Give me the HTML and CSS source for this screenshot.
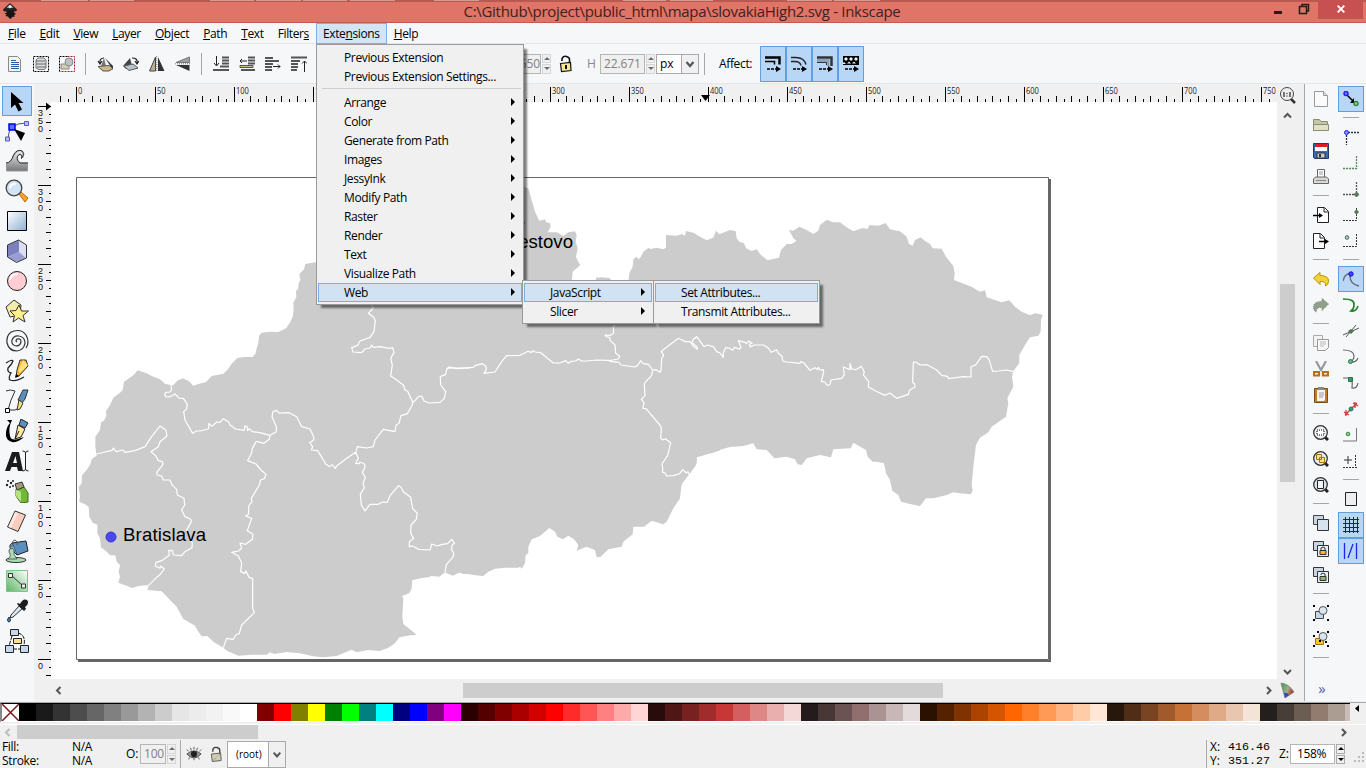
FILE: index.html
```html
<!DOCTYPE html>
<html lang="en">
<head>
<meta charset="utf-8">
<title>slovakiaHigh2.svg - Inkscape</title>
<link rel="stylesheet" href="styles.css">
</head>
<body>
<div class="window">
  <header class="titlebar">
    <svg class="logo" viewBox="0 0 18 18"><path d="M9 1l7 6.500q0 2-3 2H5q-3 0-3-2z" fill="#222"/><path d="M9 2.500l3.500 3.500-2-.5-1.500 1-1.500-1-2 .7z" fill="#dfe8f2"/><path d="M5 8.500h8v2l2 1.500-2 1 1 1.500-3 .5-1 2-2-1-1-1.500-2.500-.5 1-1.500-2-1 2.500-1z" fill="#151515"/></svg>
    <h1 class="title">C:\Github\project\public_html\mapa\slovakiaHigh2.svg - Inkscape</h1>
    <div class="winbtns">
      <svg class="wb" viewBox="0 0 26 20"><path d="M9 11h8v3H9z" fill="#2a1a18"/></svg>
      <svg class="wb" viewBox="0 0 26 20"><path d="M8.500 6.500h7v7h-7zM11 6V4.500h6.500v6.500H16" fill="none" stroke="#2a1a18" stroke-width="1.500"/></svg>
      <svg class="close" viewBox="0 0 45 20"><path d="M19.500 6l7 7m0-7l-7 7" stroke="#fff" stroke-width="2"/></svg>
    </div>
  </header>

  <nav class="menubar">
    <span class="mi"><u>F</u>ile</span><span class="mi"><u>E</u>dit</span><span class="mi"><u>V</u>iew</span><span class="mi"><u>L</u>ayer</span><span class="mi"><u>O</u>bject</span><span class="mi"><u>P</u>ath</span><span class="mi"><u>T</u>ext</span><span class="mi">Filter<u>s</u></span><span class="mi open">Exte<u>n</u>sions</span><span class="mi"><u>H</u>elp</span>
  </nav>

  <div class="toolbar">
    <div class="group">
      <svg class="ic" viewBox="0 0 16 16"><path d="M1.500.5h9l3 3v12h-12z" fill="#f4f4f2" stroke="#888a85"/><path d="M4 4.500h5M4 6.500h8M4 8.500h8M4 10.500h8M4 12.500h8" stroke="#2a5caa" stroke-width="1.200"/></svg>
      <svg class="ic" viewBox="0 0 16 16"><path d="M.5.5h15v15H.5z" fill="none" stroke="#000" stroke-dasharray="2 1"/><path d="M3 4l2-2h6l2 2v8l-2 1.500H6L3 12z" fill="#ddd" stroke="#777"/><path d="M3 5h9M3 8h10M4 11h9" stroke="#666"/></svg>
      <svg class="ic" viewBox="0 0 16 16"><path d="M.5 15.500V.5h8" fill="none" stroke="#000" stroke-dasharray="2 1"/><path d="M8.500.5h7v15H.5" fill="none" stroke="#a02030" stroke-dasharray="2 1"/><path d="M2 8h8v5H2z" fill="#d8cfa8" stroke="#888"/><circle cx="10" cy="6" r="4" fill="#bcc2c8" stroke="#888"/></svg>
    </div>
    <i class="vsep"></i>
    <div class="group">
      <svg class="ic" viewBox="0 0 16 16"><path d="M7 2l2 8H4z" fill="#777"/><path d="M8 2l8 8v4z" fill="#333"/><path d="M1 10.500l11-1 4 3-4 2.500H6z" fill="#cdb985" stroke="#555"/><path d="M7 2Q2 2 3 8M1 5l2 3 2-3" fill="none" stroke="#222" stroke-width="1.200"/></svg>
      <svg class="ic" viewBox="0 0 16 16"><path d="M7 2L0 10l3 3 6-3z" fill="#444"/><path d="M1 10l5 4.500 9-2.500-5-4z" fill="#bcc4cb" stroke="#555"/><path d="M9 2q6 0 5 5M12 5l2 3 2-3" fill="none" stroke="#222" stroke-width="1.200"/></svg>
      <svg class="ic" viewBox="0 0 16 16"><path d="M6.500 1v14H.5z" fill="#b9b093" stroke="#444"/><path d="M9 1v14h6.500z" fill="#333"/><path d="M7.800 0v16" stroke="#777" stroke-dasharray="1 1"/></svg>
      <svg class="ic" viewBox="0 0 16 16"><path d="M14.500 1v5.500H1z" fill="#9aa0a5" stroke="#777"/><path d="M14.500 15V9H1z" fill="#333"/><path d="M0 7.800h16" stroke="#777" stroke-dasharray="1 1"/></svg>
    </div>
    <i class="vsep"></i>
    <div class="group">
      <svg class="ic" viewBox="0 0 16 16"><path d="M3.500 0v9M1 7l2.500 3L6 7" fill="none" stroke="#222"/><path d="M9 1.500h7M9 4.500h7M9 7.500h7M7 10.500h9M0 14h16" stroke="#555" stroke-width="2"/></svg>
      <svg class="ic" viewBox="0 0 16 16"><path d="M1 5h7M3 3L1 5l2 2" fill="none" stroke="#222"/><path d="M9 1.500h7M9 4.500h7M9 7.500h7M2 14h14" stroke="#555" stroke-width="2"/><path d="M1 9.500h13v2H1z" fill="#cdb985" stroke="#555"/></svg>
      <svg class="ic" viewBox="0 0 16 16"><path d="M0 2h8M0 5h14M0 8h8M0 11h7M0 14h7" stroke="#555" stroke-width="2"/><path d="M8 10.500h7M13 8.500l2 2-2 2" fill="none" stroke="#222"/></svg>
      <svg class="ic" viewBox="0 0 16 16"><path d="M0 1.500h16M0 5h9M0 8h7M0 11h7M0 14h6" stroke="#555" stroke-width="2"/><path d="M13.500 16V5M11 7.500L13.500 5 16 7.500" fill="none" stroke="#222"/></svg>
    </div>
    <div class="size">
      <span class="num w">137.550</span><span class="spin dis"><b></b><b></b></span>
      <svg class="lock" viewBox="0 0 14 18"><path d="M3 6V4q1-3.500 4.500-2.500Q11 2.500 10.500 5v3" fill="none" stroke="#111" stroke-width="1.600"/><path d="M1.500 8.500l10-1 .5 8-9.500 1z" fill="#f4e98e" stroke="#111" stroke-width="1.200"/><path d="M7 10v4" stroke="#111" stroke-width="2"/></svg>
      <span class="lbl">H</span>
      <span class="num">22.671</span><span class="spin dis"><b></b><b></b></span>
      <span class="combo"><span>px</span><svg viewBox="0 0 16 18"><path d="M4.500 7L8 11l3.500-4" fill="none" stroke="#555" stroke-width="2.200"/></svg></span>
      <i class="vsep"></i>
      <span class="affect">Affect:</span>
    </div>
    <div class="toggles">
      <span class="tg"><svg class="tic" viewBox="0 0 16 16"><path d="M0 1.500h14.500v7" fill="none" stroke="#000" stroke-width="2.500"/><path d="M0 5.500h9.500v3" fill="none" stroke="#000" stroke-width="1.500"/><path d="M2 13h10" stroke="#000" stroke-width="1.500" stroke-dasharray="3 1"/><path d="M11 10l5 3-5 3z"/></svg></span>
      <span class="tg"><svg class="tic" viewBox="0 0 16 16"><path d="M0 1.500h5q8 0 10 7M0 5.500h4q5 0 6 4" fill="none" stroke="#222" stroke-width="1.400"/><path d="M2 13h10" stroke="#000" stroke-width="1.500" stroke-dasharray="3 1"/><path d="M11 10l5 3-5 3z"/></svg></span>
      <span class="tg"><svg class="tic" viewBox="0 0 16 16"><path d="M0 1.500h14.500V10" fill="none" stroke="#333" stroke-width="2.500"/><path d="M0 4.500h11V10" fill="none" stroke="#8fa3b8" stroke-width="3"/><path d="M0 6.500h9.500V9" fill="none" stroke="#333"/><path d="M2 13h10" stroke="#000" stroke-width="1.500" stroke-dasharray="3 1"/><path d="M11 10l5 3-5 3z"/></svg></span>
      <span class="tg"><svg class="tic" viewBox="0 0 16 16"><path d="M0 0h16v9H0z"/><path d="M1 3l2-2 2 2-2 2zM6 3l2-2 2 2-2 2zM11 3l2-2 2 2-2 2zM0 7l1-1 2 2H0zM4 7.500l2-2 2 2zM9 7.500l2-2 2 2z" fill="#e8f1fb"/><path d="M2 13h10" stroke="#000" stroke-width="1.500" stroke-dasharray="3 1"/><path d="M11 10l5 3-5 3z"/></svg></span>
    </div>
  </div>

  <div class="main">
    <aside class="toolbox">
      <span class="tool on"><svg viewBox="0 0 24 24"><path d="M6 3v16l4-3.500 3.500 7 3.500-2-3.500-6.500h5z" fill="#000"/></svg></span>
      <span class="tool"><svg viewBox="0 0 24 24"><path d="M3 20Q3 4 21 4" fill="none" stroke="#555"/><path d="M4 5h6v6H4z" fill="#5a6cff" stroke="#00e" stroke-width="1.500"/><path d="M19.500 2.500h4v4h-4zM.5 22h4v-4H.5z" fill="#b9bdf2" stroke="#5656d8"/><path d="M9 10l11 4-4 8z"/></svg></span>
      <span class="tool"><svg viewBox="0 0 24 24"><defs><linearGradient id="gw" x2="0" y2="1"><stop offset="0" stop-color="#eee"/><stop offset="1" stop-color="#777"/></linearGradient></defs><path d="M1.500 22v-8q5 0 7-7 4-7 9-5 3 3 0 7 0-5-4-3-4 4 1 8h8v8z" fill="url(#gw)" stroke="#999"/><path d="M1 14q5 0 7.500-8Q12-.5 17 2q3 3-.5 7.500.5-5-2.500-4-4 4 1 8.500h8" fill="none" stroke="#333"/></svg></span>
      <span class="tool"><svg viewBox="0 0 24 24"><path d="M14 15l2-2 7 6-3 4z" fill="#f6a52b" stroke="#b36b00"/><circle cx="9" cy="9" r="7.800" fill="#d2e3f4" stroke="#444" stroke-width="1.300"/><path d="M5 9q1-5 6-4" fill="none" stroke="#fff" stroke-width="2"/></svg></span>
      <span class="tool"><svg viewBox="0 0 24 24"><defs><linearGradient id="gr" x2="1" y2="1"><stop offset="0" stop-color="#fff"/><stop offset="1" stop-color="#8db0d0"/></linearGradient></defs><path d="M2.500 2.500h19v19h-19z" fill="url(#gr)" stroke="#000"/></svg></span>
      <span class="tool"><svg viewBox="0 0 24 24"><path d="M3 6l11-5v12L3 18z" fill="#7d80bf"/><path d="M14 1.500l7 5V19l-7-6z" fill="#dcdef5"/><path d="M3 18l11-5 7 6-9.500 4z" fill="#9a9dd4"/><path d="M2.500 6l11-5 8 5v13l-10 4.500-9-5.500z" fill="none" stroke="#333"/></svg></span>
      <span class="tool"><svg viewBox="0 0 24 24"><circle cx="12" cy="12" r="9.500" fill="#ffcdd2" stroke="#222"/><path d="M5 11q1-6 8-6" fill="none" stroke="#fff" stroke-width="2"/></svg></span>
      <span class="tool"><svg viewBox="0 0 24 24"><path d="M1 8l8-7 7 5-1 10-10 2z" fill="#f4ecab" stroke="#333"/><path d="M14 6l2.500 6 7 0-5.500 4.500 2 6.500-6.500-4-5.500 4 1.500-6.500L5 12l6-.5z" fill="#fff08a" stroke="#333"/></svg></span>
      <span class="tool"><svg viewBox="0 0 24 24"><path d="M12 13q-2-1 0-3 4-1 4 3-1 4-5 4-5-1-4-6 2-5 7-4 6 1 6 7-1 7-8 8-8 0-10-8Q1 4 9 2q8-2 12 4 4 7 0 13" fill="none" stroke="#333" stroke-width="1.200"/></svg></span>
      <span class="tool"><svg viewBox="0 0 24 24"><path d="M1 4q6-4 7-2-1 3-5 7-1 4 3 5-3 5-1 7 6 2 14-3" fill="none" stroke="#222" stroke-width="1.300"/><path d="M15 1h6l2 6-9 10-3 1 1-7z" fill="#ffb52e" stroke="#333"/><path d="M18 1l-5 11 2 2 8-8z" fill="#ffe27a"/><path d="M10 19l1-4 3 2z"/></svg></span>
      <span class="tool"><svg viewBox="0 0 24 24"><path d="M1 2q4-2 9 0-5 10-7 19h7q7-2 4-11" fill="none" stroke="#333"/><path d="M.5 19.500h4v4h-4z" fill="#fff" stroke="#000"/><path d="M18 1h5l-3 9-3 4-4-3z" fill="#5b8fbf" stroke="#333"/><path d="M14 11l4 3-3 6-3 1z" fill="#ffe27a" stroke="#333"/></svg></span>
      <span class="tool"><svg viewBox="0 0 24 24"><path d="M2 1h5q-4 8-2 16 1 5 8 3l6-2q-6 6-12 5-7-2-6-10 1-6 4-9z"/><path d="M16 0l7 4-3 5-6-3z" fill="#5b8fbf" stroke="#222"/><path d="M13 6l7 4-4 8-6 2z" fill="#ffe9a0" stroke="#222"/><path d="M10 20l4-8" stroke="#222"/></svg></span>
      <span class="tool"><svg viewBox="0 0 24 24"><path d="M0 22L7 3h7l4 19h-5l-1-4H6.500L5 22zM8 14h4L10.500 7z" fill="#1c1c1c" fill-rule="evenodd"/><path d="M17.500 2q3 0 3 2v16q0 2-3 2m6-20q-3 0-3 2v16q0 2 3 2" fill="none" stroke="#222"/></svg></span>
      <span class="tool"><svg viewBox="0 0 24 24"><path d="M11 10l8-2 4 6v9l-7 1-5-7z" fill="#74b83a" stroke="#3c6b17"/><path d="M11 10l5 3v10l-5-6z" fill="#b4e37f"/><path d="M10 5l7-2 2 5-7 3z" fill="#a59b7c" stroke="#333"/><g fill="#222"><circle cx="3" cy="2" r="1"/><circle cx="6" cy="4" r="1.200"/><circle cx="2" cy="6" r="1.200"/><circle cx="5" cy="8" r="1"/><circle cx="8" cy="2" r="1"/><circle cx="8" cy="7" r="1"/></g></svg></span>
      <span class="tool"><svg viewBox="0 0 24 24"><path d="M10 2l10.500 4L13 22.500 2.500 18z" fill="#f8cdbd" stroke="#333"/><path d="M10 3l3 1-7 15-2.500-1z" fill="#fff" opacity=".5"/></svg></span>
      <span class="tool"><svg viewBox="0 0 24 24"><ellipse cx="11" cy="21" rx="10" ry="2.500" fill="#a9dcb4" stroke="#333"/><path d="M7 4l14-2 2 10-11 4z" fill="#5b8fbf" stroke="#222"/><path d="M12 16L5 9q-1-3 2-5" fill="#8fb7d8" stroke="#222"/><path d="M7 9q-4 1-3 4 3 4-1 7h9q-4-4-3-9z" fill="#a9dcb4" stroke="#333" stroke-width=".7"/><path d="M7 8q0-7 3-7 3 1 2 5" fill="none" stroke="#555"/></svg></span>
      <span class="tool"><svg viewBox="0 0 24 24"><defs><linearGradient id="gg" x1="1" x2="0" y2="1"><stop offset="0" stop-color="#fff"/><stop offset="1" stop-color="#5cb566"/></linearGradient></defs><path d="M1.500 1.500h21v21h-21z" fill="url(#gg)" stroke="#7fc488"/><path d="M6 6l12 11" stroke="#333"/><path d="M3.500 4.500h4v4h-4zM16.500 15h4v4h-4z" fill="#e8f5e9" stroke="#333"/></svg></span>
      <span class="tool"><svg viewBox="0 0 24 24"><path d="M15 5q3-6 7-4 3 3-2 7l1 2-2 2-7-7 1-1z" fill="#1c1c1c"/><path d="M14 7l3 3-9 8-3 1 1-3z" fill="#dde6ec" stroke="#333"/><path d="M4 18q3 4 0 5-3-1 0-5z" fill="#3f7fb5" stroke="#234"/></svg></span>
      <span class="tool"><svg viewBox="0 0 24 24"><path d="M7 7L4 17M13 4q8 2 6 12M8 20h8" fill="none" stroke="#111" stroke-dasharray="4 1"/><path d="M5.500.5h8v6h-8zM.5 16.500h8v7h-8zM15.500 16.500h8v7h-8z" fill="#c5d8ec" stroke="#222"/><path d="M8.500 9.500h8v5h-8z" fill="#ffe08a" stroke="#222"/></svg></span>
    </aside>

    <section class="editor">
      <div></div>
      <svg class="ruler-h" id="rulerH" width="1226" height="18" viewBox="51 84 1226 18"></svg>
      <div class="corner"><svg class="ic18" viewBox="0 0 18 18"><path d="M11 12l5 5" stroke="#333" stroke-width="2.500"/><circle cx="8" cy="8" r="6.500" fill="#eee" stroke="#444"/><path d="M5 6v5M11 6v5M8 7v1M8 9.500v1" stroke="#222" stroke-width="1.200"/></svg></div>
      <svg class="ruler-v" id="rulerV" width="17" height="577" viewBox="34 102 17 577"></svg>
      <svg class="canvas" width="1226" height="577" viewBox="51 102 1226 577">
        <path d="M1049 179v481H78v2h973V179z" fill="#666"/>
        <path d="M76.500 177.500h972v482h-972z" fill="#fff" stroke="#666"/>
        <g fill="#ccc">
          <path transform="translate(70 250) scale(.33333)" d="M1200 36L760 36 738 37 722 39 706 42 702 58 688 72 691 90 686 100 684 118 678 122 679 142 670 158 671 180 668 200 660 218 648 235 625 246 600 245 575 248 567 258 565 280 560 295 556 312 547 321 525 321 502 324 485 341 472 360 460 371 425 378 408 396 388 401 370 407 357 394 338 385 322 392 308 407 298 404 285 401 270 388 245 378 230 370 203 361 190 376 162 395 158 420 150 428 130 443 120 466 108 483 109 497 102 512 93 517 90 540 76 560 76 590 80 617 66 626 60 645 50 660 36 676 35 700 26 712 30 738 28 755 45 763 56 770 58 800 68 818 82 824 82 850 90 865 93 892 110 905 120 916 136 916 140 935 150 945 146 965 150 980 145 998 165 1006 187 1014 205 1008 232 1006 232 1020 275 1024 300 1050 320 1070 340 1107 375 1127 385 1145 395 1159 412 1158 430 1175 460 1193 472 1203 505 1217 545 1214 590 1214 600 1207 612 1212 650 1206 690 1210 730 1219 760 1222 800 1218 845 1199 860 1207 895 1200 930 1203 955 1193 975 1180 988 1162 1020 1156 1040 1155 1020 1138 1000 1122 997 1100 1000 1045 996 1038 1018 1030 1025 1015 1027 990 1060 983 1075 982 1085 978 1108 980 1125 967 1145 974 1165 967 1180 972 1200 972z"/>
          <path transform="translate(350 270) scale(.33333)" d="M0 30L0 800 188 930 220 921 240 917 285 907 308 917 330 907 365 914 400 918 415 905 435 896 465 893 505 893 510 890 515 896 525 880 527 855 535 850 535 830 545 808 570 798 598 774 615 785 622 800 638 808 655 797 672 808 685 825 680 842 710 830 735 840 740 862 752 860 775 838 815 830 820 815 848 793 850 770 882 770 905 752 940 763 950 755 970 715 990 685 995 640 1020 610 1040 580 1040 560 1062 552 1085 550 1110 541 1110 36 790 36 780 26 740 22 735 36z"/>
          <path transform="translate(310 0) scale(.33333)" d="M500 560L640 560 655 565 665 600 675 635 688 662 705 658 708 666 720 670 722 680 713 697 740 697 760 708 775 697 795 694 800 705 797 725 803 745 798 770 803 782 811 795 788 815 785 850 500 920z"/>
          <path transform="translate(600 170) scale(.33333)" d="M0 322L28 324 34 335 85 335 88 310 98 290 100 268 110 260 116 268 122 262 130 245 145 234 152 237 170 233 190 238 198 233 198 195 230 197 245 192 255 197 258 183 280 188 300 200 320 211 340 203 348 182 358 193 390 180 407 184 410 205 418 215 432 220 438 235 455 243 470 238 480 252 502 271 537 263 543 240 560 222 575 222 590 212 580 205 567 180 580 182 598 170 620 180 640 192 655 182 660 165 680 149 700 157 720 157 740 172 760 184 788 174 803 177 808 165 835 167 857 159 870 178 900 184 920 200 927 222 938 227 945 210 962 202 975 213 990 222 998 235 1025 236 1038 260 1060 288 1064 310 1062 330 1115 350 1140 365 1155 361 1160 382 1205 397 1228 391 1245 410 1265 425 1290 436 1305 430 1328 434 1323 450 1322 485 1315 497 1290 502 1275 525 1258 555 1258 580 1240 603 1236 620 1240 650 1232 665 1222 685 1225 700 1218 740 1175 770 1165 787 1140 803 1128 825 1120 890 1115 945 1118 962 1112 973 1080 970 1060 967 1040 975 1000 985 978 985 960 1008 930 1002 903 995 895 975 877 962 870 930 858 910 852 880 830 875 818 875 803 860 798 840 760 818 752 835 700 838 693 862 660 855 620 865 605 885 593 883 585 868 560 860 523 865 500 840 470 838 460 820 430 828 390 831 350 842 315 855 290 862 288 885 268 912 243 945 238 975 220 1010 205 1035 0 1035z"/>
        </g>
        <g class="borders">
          <path transform="translate(70 250) scale(.33333)" d="M80 612L105 606 126 601 130 594 138 605 160 600 165 607 195 602 225 590 245 560 270 528 288 541 291 558 270 575 265 590 243 605 258 618 265 632 277 635 279 643 260 668 262 675 275 678 280 690 300 690 307 706 320 718 322 735 342 745 344 765 335 780 345 800 362 808 364 815 349 842 360 865 367 880 366 893 345 905 335 917 310 915 308 902 296 901 298 916 275 932 258 937 256 948 270 955 272 948 283 957 270 974 262 980 245 997 234 1007 232 1017M303 407L305 418 300 426 287 427 284 435 289 441 300 440 315 432 327 444 341 446 352 463 350 477 341 485 345 510 368 550 380 543 391 543 415 537 417 520 426 529 440 516 450 517 460 506 475 515 480 525 497 537 523 541 524 528 531 529 533 542 538 536 547 545 570 548 600 556 619 545 619 530 606 500 609 485 620 481 627 489 657 488 680 500 695 530 720 537 731 560 731 570 719 578 728 590 724 600 743 602 768 643 779 650 786 644 796 655 800 648 830 625 858 606M600 556L598 567 582 580 559 574 547 595 545 608 533 632 558 642 573 660 588 673 583 686 572 690 568 705 544 745 546 755 536 768 536 792 527 798 545 805 538 825 532 842 549 853 547 868 527 883 510 879 515 895 505 903 485 907 505 918 515 939 512 965 524 970 528 963 537 982 548 985 548 1050 548 1074 553 1088 515 1125 508 1150 497 1155 490 1168 470 1165 460 1193M905 165L909 175 895 190 911 202 916 212 912 245 900 262 870 273 863 286 845 293 849 306 875 308 885 297 900 294 905 285 910 292 930 290 958 295 968 293 972 308 962 325 967 345 962 378 977 388 1000 405 1005 420 1013 424 1028 457 1027 465 1012 491 993 497 987 520 978 526 975 545 940 538 915 570 910 590 890 594 862 590 857 607 865 625 857 640 868 641 870 636 884 642 884 655 877 667 886 683 879 700 883 713 871 733 874 765 885 783 900 763 925 763 937 756 952 757 960 737 986 707 993 712 1000 725 1022 742 1028 775 1042 790 1039 808 1023 825 1022 850 1031 865 1018 875 1018 890 1027 888 1046 898 1080 900 1085 882 1100 888 1117 883 1133 881 1145 868 1154 880 1147 884 1144 898 1151 909 1150 920 1129 944 1125 967M1028 457L1035 452 1045 440 1055 438 1062 453 1077 459 1110 457 1123 445 1127 425 1112 405 1111 380 1127 373 1130 358 1138 350 1145 354 1200 354"/>
          <path transform="translate(350 270) scale(.33333)" d="M290 295L305 293 320 296 370 292 375 287 397 281 408 289 409 298 402 310 435 306 455 275 470 257 510 256 534 244 545 247 548 242 556 246 572 248 610 279 630 279 647 272 655 280 665 274 677 273 685 267 695 273 710 273 740 270 775 271 782 274 807 277 813 285 855 291 864 285 872 272 880 281 895 283 908 300M795 165L790 170 791 190 782 196 765 195 771 201 779 202 780 211 795 225 797 250 809 258 805 267 788 270 780 271"/>
          <path transform="translate(600 170) scale(.33333)" d="M158 600L168 599 180 607 183 600 185 565 191 557 184 545 189 540 235 505 256 515 270 515 280 529 292 538 291 530 276 518 280 508 290 500 312 530 322 525 340 530 350 545 360 549 370 562 370 548 377 533 387 534 398 541 403 532 418 537 423 532 415 512 435 517 439 521 447 513 456 520 448 522 451 531 463 525 490 525 505 534 514 547 530 539 535 550 546 559 548 573 560 576 600 580 602 575 612 579 630 601 645 593 652 599 655 592 660 600 670 599 671 606 664 634 674 636 682 647 690 643 693 630 725 625 733 614 730 591 750 599 750 580 755 597 768 599 784 589 793 606 790 615 806 635 805 651 833 666 855 676 870 669 890 685 925 673 929 660 945 651 944 642 938 637 940 577 948 576 960 585 981 584 1010 600 1025 616 1042 619 1046 626 1090 620 1113 621 1113 591 1128 584 1145 559 1160 560 1167 569 1178 604 1195 603 1220 600 1240 605M158 600L155 616 133 640 135 677 124 688 132 698 129 715 138 716 182 768 184 776 182 805 189 810 196 806 212 818 203 856 186 882 188 895 188 907 195 909 200 918 220 917 239 911 248 899 259 909 264 905 268 915"/>
        </g>
        <circle cx="111" cy="537" r="5" fill="#4848ec" stroke="#3c36cc"/>
        <circle cx="519" cy="223" r="5" fill="#4848ec" stroke="#3c36cc"/>
        <text class="city" x="123" y="541" textLength="83">Bratislava</text>
        <text class="city" x="573" y="248" text-anchor="end">Námestovo</text>
      </svg>
      <div class="vscroll">
        <svg class="arr" viewBox="0 0 15 15"><path d="M4 9.500L7.500 6 11 9.500" fill="none" stroke="#555" stroke-width="2"/></svg>
        <span class="thumb"></span>
        <svg class="arr" viewBox="0 0 15 15"><path d="M4 6l3.500 3.500L11 6" fill="none" stroke="#555" stroke-width="2"/></svg>
      </div>
      <div></div>
      <div class="hscroll">
        <svg class="arr" viewBox="0 0 15 15"><path d="M9.500 4L6 7.500 9.500 11" fill="none" stroke="#555" stroke-width="2"/></svg>
        <span class="thumb"></span>
        <svg class="arr" viewBox="0 0 15 15"><path d="M6 4l3.500 3.500L6 11" fill="none" stroke="#555" stroke-width="2"/></svg>
      </div>
      <div class="corner"><svg class="ic18" viewBox="0 0 18 18"><defs><linearGradient id="gc" x2="1" y2=".4"><stop offset="0" stop-color="#2fa04a"/><stop offset=".6" stop-color="#9ab08a"/><stop offset="1" stop-color="#c02020"/></linearGradient></defs><path d="M2 2q8 1 13 9l-9 6z" fill="url(#gc)" stroke="#888"/><path d="M5 12l3 0 2 2-4 2.500z" fill="#3344c0"/></svg></div>
    </section>

    <aside class="panel">
      <div class="col">
        <span class="cb"><svg viewBox="0 0 16 16"><path d="M1.500.5h9l4 4v11h-13z" fill="#fbfbfb" stroke="#999"/><path d="M10.500.5v4h4" fill="#ddd" stroke="#999"/></svg></span>
        <span class="cb"><svg viewBox="0 0 16 16"><path d="M.5 13.500V2.500h6l1.500 2h6.500v9z" fill="#c4c8a8" stroke="#8a8f70"/><path d="M.5 13.500v-6h15v6z" fill="#dfe2c9" stroke="#8a8f70"/></svg></span>
        <span class="cb"><svg viewBox="0 0 16 16"><path d="M.5.5h15v15h-14l-1-1z" fill="#3b6ab5" stroke="#1d3c70"/><path d="M2 1h12v3H2z" fill="#e01b24"/><path d="M2 4h12v4H2z" fill="#fff"/><path d="M4 10h8v5H4z" fill="#ccc" stroke="#333"/><path d="M6 11h2v3H6z" fill="#333"/></svg></span>
        <span class="cb"><svg viewBox="0 0 16 16"><path d="M4.500 9V.5h7V9" fill="#fff" stroke="#666"/><path d="M6 3h4M6 5h4" stroke="#999"/><path d="M.5 14.500V10l2-2h11l2 2v4.500z" fill="#d8d8d4" stroke="#666"/><path d="M3 11.500h10" stroke="#888"/></svg></span>
        <i class="hs"></i>
        <span class="cb"><svg viewBox="0 0 16 16"><path d="M4.500.5h7l4 4v11h-11zM11 1v4h4" fill="#fff" stroke="#222"/><path d="M0 8.500h8" stroke="#000" stroke-width="1.500"/><path d="M6 6l4 2.500L6 11z"/></svg></span>
        <span class="cb"><svg viewBox="0 0 16 16"><path d="M.5.500h7l4 4v11H.5zM7 1v4h4" fill="#fff" stroke="#222"/><path d="M6 8.500h8" stroke="#000" stroke-width="1.500"/><path d="M12 6l4 2.500-4 2.500z"/></svg></span>
        <i class="hs"></i>
        <span class="cb"><svg viewBox="0 0 16 16"><path d="M.5 7L7 1.500v3q9 0 8.500 6 0 3-3 4.500 1-5-5.500-4.500v3z" fill="#f3d233" stroke="#b8940a"/></svg></span>
        <span class="cb"><svg viewBox="0 0 16 16"><path d="M15.500 7L9 1.500v3Q0 4.500.5 10.500q0 3 3 4.500-1-5 5.500-4.500v3z" fill="#8f9f88" stroke="#7a8474" stroke-dasharray="1 1"/></svg></span>
        <i class="hs"></i>
        <span class="cb"><svg viewBox="0 0 16 16"><path d="M.5.5h9v11h-9z" fill="#f2f2f2" stroke="#aaa"/><path d="M4.500 4.500h11v8l-3 3h-8z" fill="#f6f6f6" stroke="#999"/><path d="M7 7h6M7 9h6M7 11h4" stroke="#bbb"/></svg></span>
        <span class="cb"><svg viewBox="0 0 16 16"><path d="M3 0l5.500 10M13 0L7.500 10" stroke="#999" stroke-width="2.200"/><path d="M1 11h5v3.500H1zM10 11h5v3.500h-5z" fill="none" stroke="#b5701e" stroke-width="2.200"/></svg></span>
        <span class="cb"><svg viewBox="0 0 16 16"><path d="M1.500 1.500h13v14h-13z" fill="#c17d2b" stroke="#7a4d12"/><path d="M4 3h8v10l-1 1H4z" fill="#f6f6f2"/><path d="M5 0h6v3H5z" fill="#888"/><path d="M6 6h5M6 8h5M6 10h4" stroke="#999"/></svg></span>
        <i class="hs"></i>
        <span class="cb"><svg viewBox="0 0 16 16"><path d="M11 11l4 4" stroke="#222" stroke-width="3"/><circle cx="7.500" cy="7.500" r="6.800" fill="#eef2f6" stroke="#333" stroke-width="1.300"/><path d="M4 5h7v5H4z" fill="#fff" stroke="#000" stroke-dasharray="1 1"/></svg></span>
        <span class="cb"><svg viewBox="0 0 16 16"><path d="M11 11l4 4" stroke="#222" stroke-width="3"/><circle cx="7.500" cy="7.500" r="6.800" fill="#e4eaf0" stroke="#333" stroke-width="1.300"/><path d="M3.500 3.500h5v5h-5zM6.500 6.500h5v5h-5z" fill="#ffe08a" stroke="#a5730a"/></svg></span>
        <span class="cb"><svg viewBox="0 0 16 16"><path d="M11 11l4 4" stroke="#222" stroke-width="3"/><circle cx="7.500" cy="7.500" r="6.800" fill="#d8e4f0" stroke="#333" stroke-width="1.300"/><path d="M4.500 3.500h6v8h-6z" fill="#f4f4f4" stroke="#222"/></svg></span>
        <i class="hs"></i>
        <span class="cb"><svg viewBox="0 0 16 16"><path d="M.5.5h10v9H.5z" fill="#c6d6e6" stroke="#444"/><path d="M4.500 4.500h11v11h-11z" fill="#d6e2ee" stroke="#333"/></svg></span>
        <span class="cb"><svg viewBox="0 0 16 16"><path d="M.5.5h10v9H.5z" fill="#c6d6e6" stroke="#333"/><path d="M4.500 4.500h11v11h-11z" fill="#e6eef6" stroke="#333"/><path d="M8 9V7q2-2 4 0v2" fill="none" stroke="#333"/><path d="M7 9.500h6v4H7z" fill="#f9b52e" stroke="#333"/></svg></span>
        <span class="cb"><svg viewBox="0 0 16 16"><path d="M.5.5h10v9H.5z" fill="#c6d6e6" stroke="#333"/><path d="M4.500 4.500h11v11h-11z" fill="#e6eef6" stroke="#333"/><path d="M8 8q0-3 4-1v2" fill="none" stroke="#333"/><path d="M7 9.500h6v4H7z" fill="#8fb36a" stroke="#333"/></svg></span>
        <i class="hs"></i>
        <span class="cb"><svg viewBox="0 0 16 16"><path d="M2.500 6.500h8v7h-8z" fill="#c6d6e6" stroke="#444"/><circle cx="10" cy="5.500" r="4" fill="#dbe5ef" stroke="#555"/><path d="M0 0h2v2H0zM14 0h2v2h-2zM0 14h2v2H0zM14 14h2v2h-2z"/></svg></span>
        <span class="cb"><svg viewBox="0 0 16 16"><path d="M2.500 7.500h8v6h-8z" fill="#f9c52e" stroke="#a5730a"/><circle cx="10" cy="5.500" r="4" fill="#dbe5ef" stroke="#555"/><path d="M0 4h2v2H0zM4 0h2v2H4zM14 0h2v2h-2zM0 14h2v2H0zM12 10h2v2h-2zM14 14h2v2h-2zM6 9h2v2H6z"/></svg></span>
        <i class="hs"></i>
        <span class="more">»</span>
      </div>
      <div class="col">
        <span class="cb on"><svg viewBox="0 0 16 16"><path d="M4 4l7 7" stroke="#000" stroke-width="1.500"/><path d="M11 7v5H7z"/><circle cx="3" cy="2.500" r="2" fill="#77f" stroke="#22e" stroke-width="1.500"/><circle cx="13" cy="12.500" r="2" fill="#9c9" stroke="#2a8a3a" stroke-width="1.500"/></svg></span>
        <i class="hs"></i>
        <span class="cb"><svg viewBox="0 0 16 16"><path d="M5 3.500h11M3.500 6v10" stroke="#333" stroke-width="1.300" stroke-dasharray="2 1"/><circle cx="3.500" cy="3.500" r="2" fill="#88f" stroke="#22e"/></svg></span>
        <span class="cb"><svg viewBox="0 0 16 16"><path d="M13.500 1v12.500H0" fill="none" stroke="#5a8a5a" stroke-width="1.300" stroke-dasharray="2 1"/></svg></span>
        <span class="cb"><svg viewBox="0 0 16 16"><path d="M13.500 1v12.500H0" fill="none" stroke="#555" stroke-width="1.300" stroke-dasharray="2 1"/><path d="M13.500 10.500l3 3-3 3-3-3z" fill="#5a7a5a"/></svg></span>
        <span class="cb"><svg viewBox="0 0 16 16"><path d="M13.500 1v12.500H0" fill="none" stroke="#333" stroke-dasharray="2 1"/><path d="M13.500 2l2.500 3-2.500 3L11 5z" fill="#5a7a5a"/></svg></span>
        <span class="cb"><svg viewBox="0 0 16 16"><path d="M13.500 1v12.500H0" fill="none" stroke="#333" stroke-dasharray="2 1"/><circle cx="4" cy="4.500" r="1.800" fill="#bcb" stroke="#465" /></svg></span>
        <i class="hs"></i>
        <span class="cb on"><svg viewBox="0 0 16 16"><path d="M0 10Q2 2 7 3q-1 10 9 12" fill="none" stroke="#667" stroke-width="1.300"/><circle cx="8" cy="3" r="2.200" fill="#44f" stroke="#11d"/></svg></span>
        <span class="cb"><svg viewBox="0 0 16 16"><path d="M0 2q12 0 11 6 0 4-3 6 5 1 7-5" fill="none" stroke="#1f7f2a" stroke-width="1.600"/></svg></span>
        <span class="cb"><svg viewBox="0 0 16 16"><path d="M0 12l16-7M3 14L13 2" stroke="#555"/><path d="M5 8l3-2 3 2-3 3z" fill="#4a7a4a"/></svg></span>
        <span class="cb"><svg viewBox="0 0 16 16"><path d="M0 1q11 0 11 6 0 4-4 6 6 1 8-4" fill="none" stroke="#666" stroke-width="1.200"/><circle cx="7.500" cy="12.500" r="2" fill="#6cba7c" stroke="#275"/></svg></span>
        <span class="cb"><svg viewBox="0 0 16 16"><path d="M0 3h7q3 1 2 10 5 1 6-5" fill="none" stroke="#666" stroke-width="1.200"/><path d="M5.500 2.500h4v4h-4z" fill="#3c9a4c" stroke="#275"/></svg></span>
        <span class="cb"><svg viewBox="0 0 16 16"><path d="M2 14L14 2M1 11l5 3M3 9v6M10 2l5 3M12 1v6" stroke="#c33" stroke-width="1.200"/><circle cx="8" cy="8" r="2" fill="#4a9a5a" stroke="#275"/></svg></span>
        <span class="cb"><svg viewBox="0 0 16 16"><path d="M13.500 1v13H0" fill="none" stroke="#777"/><circle cx="5" cy="7" r="1.800" fill="#9c9" stroke="#2a8a3a"/></svg></span>
        <span class="cb"><svg viewBox="0 0 16 16"><path d="M5 3v8M1 7h8" stroke="#333"/><path d="M12.500 2v12M0 14.500h14" stroke="#333" stroke-dasharray="2 1"/></svg></span>
        <i class="hs"></i>
        <span class="cb"><svg viewBox="0 0 16 16"><path d="M2.500 1.500h11v13h-11z" fill="#eee" stroke="#222"/></svg></span>
        <span class="cb on"><svg viewBox="0 0 16 16"><path d="M0 2.500h16M0 6.500h16M0 10.500h16M0 14.500h16M2.500 0v16M6.500 0v16M10.500 0v16M14.500 0v16" stroke="#11e"/></svg></span>
        <span class="cb on"><svg viewBox="0 0 16 16"><path d="M1.500 0v16M13.500 0v16M5 15l5-14" stroke="#22e" stroke-width="1.300"/></svg></span>
      </div>
    </aside>
  </div>

  <div class="palette"><div class="swatches" id="swatches"></div><svg class="pal-arrow" viewBox="0 0 16 20"><path d="M9 2v7L5 5.500z"/></svg></div>
  <div class="palscroll">
    <svg class="arr" viewBox="0 0 15 15"><path d="M9.500 4L6 7.500 9.500 11" fill="none" stroke="#bbb" stroke-width="2"/></svg>
    <span class="thumb"></span>
    <svg class="arr" viewBox="0 0 15 15"><path d="M6 4l3.500 3.500L6 11" fill="none" stroke="#555" stroke-width="2"/></svg>
  </div>

  <footer class="status">
    <div class="fs"><span>Fill:</span><span>N/A</span><span>Stroke:</span><span>N/A</span></div>
    <span class="ol">O:</span><span class="num op">100</span><span class="spin dis"><b></b><b></b></span>
    <i class="bar"></i>
    <svg class="eye" viewBox="0 0 18 16"><path d="M1 8q8-7 16 0-8 9-16 0z" fill="#999" stroke="#444"/><circle cx="9" cy="8" r="3.500" fill="#222"/><path d="M3 5L1 3M6 4L5 1M9 3V0M12 4l1-3M15 5l2-2M4 12l-1 2M9 13v2M14 12l1 2" stroke="#444"/></svg>
    <svg class="lk" viewBox="0 0 14 18"><path d="M3 6V4q1-3.500 4.500-2.500Q11 2.500 10.500 5v3" fill="none" stroke="#444" stroke-width="1.500"/><path d="M1.500 8.500l10-1 .5 8-9.500 1z" fill="#d2cfb4" stroke="#555"/><path d="M4 15L11 8" stroke="#777" stroke-dasharray="1 1"/></svg>
    <span class="layer"><span>(root)</span><svg viewBox="0 0 17 26"><path d="M5 11l3.500 4 3.500-4" fill="none" stroke="#555" stroke-width="2.200"/></svg></span>
    <i class="grow"></i>
    <i class="bar"></i>
    <div class="coords"><span>X:</span><code>416.46</code><span>Y:</span><code>351.27</code></div>
    <span class="zl">Z:</span><span class="num zoom">158%</span><span class="spin"><b></b><b></b></span>
    <svg class="grip" viewBox="0 0 12 12"><path d="M8 0h2v2H8zM8 4h2v2H8zM8 8h2v2H8zM4 4h2v2H4zM4 8h2v2H4zM0 8h2v2H0z" fill="#bbb"/></svg>
  </footer>

  <div class="popup ext">
    <div class="it">Previous Extension</div>
    <div class="it">Previous Extension Settings...</div>
    <hr>
    <div class="it sub">Arrange</div><div class="it sub">Color</div><div class="it sub">Generate from Path</div><div class="it sub">Images</div><div class="it sub">JessyInk</div><div class="it sub">Modify Path</div><div class="it sub">Raster</div><div class="it sub">Render</div><div class="it sub">Text</div><div class="it sub">Visualize Path</div><div class="it sub hot">Web</div>
  </div>
  <div class="popup web"><div class="it sub hot">JavaScript</div><div class="it sub">Slicer</div></div>
  <div class="popup js"><div class="it hot">Set Attributes...</div><div class="it">Transmit Attributes...</div></div>
</div>
<script src="app.js"></script>
</body>
</html>
```
FILE: styles.css
```css
* { box-sizing: border-box; }
body { margin: 0; overflow: hidden; font: 12px/14px "Open Sans", "Noto Sans", sans-serif; color: #000; background: #f0f0f0; }
.window { position: relative; width: 1366px; height: 768px; display: flex; flex-direction: column; }
svg { display: block; flex: none; }

.titlebar {
  flex: none; height: 23px; display: flex;
  background:
    linear-gradient(90deg, transparent 41px, #d39d95 41px 88px, transparent 88px 90px, #d39d95 90px 134px, transparent 134px 210px, #d39d95 210px 254px, transparent 254px 256px, #d39d95 256px 301px, transparent 301px 303px, #d39d95 303px 347px, transparent 347px 350px, #d39d95 350px 395px, transparent 395px 434px, #d39d95 434px 479px, transparent 479px 623px, #d39d95 623px 666px, transparent 666px 670px, #d39d95 670px 713px, transparent 713px 787px, #d39d95 787px 832px, transparent 832px 834px, #d39d95 834px 880px, transparent 880px) 0 0 / 100% 1px no-repeat,
    linear-gradient(#b85a50 0 2px, #e07466 2px 22px, #c25c50 22px);
}
.logo { width: 18px; height: 18px; margin: 2px 0 0 1px; }
.title { flex: 1; margin: 1px 0 0 80px; text-align: center; font-size: 15px; line-height: 20px; font-weight: 400; color: #40211d; letter-spacing: -.3px; }
.winbtns { display: flex; width: 101px; }
.wb { width: 26px; height: 20px; }
.close { width: 45px; height: 19px; background: #c75050; margin-left: 1px; }

.menubar { flex: none; height: 21px; padding-left: 1px; display: flex; background: #f5f7f9; border-bottom: 1px solid #e5e6e8; }
.mi { padding: 0 7px; line-height: 21px; height: 21px; white-space: nowrap; letter-spacing: -.37px; }
.mi u { text-underline-offset: 1px; }
.mi.open { background: #d3e4f5; box-shadow: inset 0 0 0 1px #7eb0e6; }

.toolbar { flex: none; height: 40px; display: flex; align-items: center; background: #f5f7f9; border-bottom: 1px solid #e5e6e8; padding-left: 7px; }
.group { display: flex; gap: 10px; }
.ic { width: 16px; height: 16px; }
.tic { width: 16px; height: 16px; }
.vsep { width: 1px; height: 22px; background: #a5a6a8; margin: 0 11px 0 10px; }
.size { display: flex; align-items: center; margin-left: 188px; width: 265px; flex: none; }
.num { display: block; flex: none; border: 1px solid #b5b5b5; background: #fff; height: 20px; line-height: 18px; padding: 0 4px; }
.size .num { background: #f0f0f0; color: #808080; width: 45px; padding: 0 3px; letter-spacing: -.1px; }
.size .num.w { width: 46px; padding: 0; text-align: right; }
.spin { width: 9px; height: 20px; margin-left: 1px; display: flex; flex: none; flex-direction: column; gap: 1px; }
.spin b { flex: 1; border: 1px solid #aaa; background: #f0f0f0; display: flex; align-items: center; justify-content: center; }
.spin b::after { content: ""; border: 3px solid transparent; border-top-width: 0; border-bottom: 3px solid #000; }
.spin b:last-child::after { border-bottom-width: 0; border-top: 3px solid #000; border-bottom-color: transparent; }
.spin.dis b { border-color: #d5d5d5; }
.spin.dis b::after { opacity: .55; }
.lock { width: 14px; height: 18px; margin: 0 0 0 8px; }
.lbl { width: 27px; padding-left: 14px; color: #888; flex: none; }
.combo { width: 43px; height: 20px; border: 1px solid #aaa; background: #fff; margin-left: 1px; display: flex; align-items: center; justify-content: space-between; padding-left: 3px; flex: none; }
.combo svg { width: 17px; height: 18px; background: #f0f0f0; border-left: 1px solid #aaa; }
.size .vsep { margin: 0 14px 0 5px; flex: none; }
.affect { white-space: nowrap; letter-spacing: -.35px; }
.toggles { display: flex; margin-left: auto; margin-right: 502px; }
.tg { width: 26px; height: 36px; background: #b8d6f6; border: 1px solid #5f9fe0; display: flex; align-items: center; justify-content: center; }

.main { flex: none; height: 618px; display: flex; }
.toolbox { width: 34px; background: #f5f7f9; padding: 2px 2px 0; height: 617px; }
.tool { display: flex; width: 30px; height: 30px; align-items: center; justify-content: center; }
.tool svg { width: 24px; height: 24px; }
.on { background: #b8d6f6; box-shadow: inset 0 0 0 1px #5f9fe0; }
.editor { width: 1270px; display: grid; grid-template: 18px 577px 23px / 17px 1226px 27px; }
.ruler-h text { font-size: 9px; fill: #222; }
.ruler-v text { font: 9px "Liberation Sans", Arial, sans-serif; fill: #111; }
.canvas { background: #fff; }
.borders path { fill: none; stroke: #fff; stroke-width: 3.6; stroke-linejoin: round; }
.city { font: 18.6px "Liberation Sans", Arial, sans-serif; }
.corner { padding: 2px 0 0 2px; }
.ic18 { width: 18px; height: 18px; }
.vscroll { margin-left: 3px; width: 15px; height: 577px; display: flex; flex-direction: column; justify-content: space-between; padding-top: 6px; }
.arr { width: 15px; height: 15px; }
.vscroll .thumb { height: 198px; background: #cdcdcd; margin-bottom: 21px; }
.hscroll { height: 15px; margin-top: 4px; display: flex; }
.hscroll .thumb { width: 480px; background: #cdcdcd; margin: 0 318px 0 397px; }
.panel { flex: 1; background: #f5f7f9; border-left: 1px solid #a8a8a8; display: flex; gap: 4px; padding: 2px 0 0 3px; height: 617px; }
.col { width: 26px; }
.cb { display: flex; width: 26px; height: 26px; align-items: center; justify-content: center; }
.cb svg { width: 16px; height: 16px; }
.hs { display: block; height: 1px; width: 16px; margin: 5px 5px 6px; background: #a5a6a8; }
.more { display: block; width: 26px; text-align: center; font-size: 15px; line-height: 20px; color: #5a5aa5; padding: 14px 0 0 2px; }

.palette { flex: none; height: 22px; display: flex; border-top: 1px solid #aaa; }
.swatches { width: 1350px; height: 19px; border-top: 1px solid #000; border-left: 2px solid #888; border-bottom: 1px solid #fff; display: flex; overflow: hidden; }
.sw { flex: none; width: 17px; height: 17px; }
.none { background: #fff; }
.pal-arrow { width: 16px; height: 20px; }
.palscroll { flex: none; height: 16px; display: flex; border-top: 1px solid #fff; }
.palscroll .thumb { width: 241px; height: 14px; margin: 0 auto 0 2px; background: #cdcdcd; }
.palscroll .arr:last-child { margin-right: 15px; }

.status { flex: 1; display: flex; align-items: center; }
.fs { display: grid; grid-template-columns: 70px 54px; padding-left: 2px; letter-spacing: -.35px; }
.ol { width: 14px; }
.op { width: 26px; color: #808080; background: #f0f0f0; padding: 0 3px; letter-spacing: -.2px; }
.bar { width: 1px; height: 28px; background: #aaa; margin-left: 4px; }
.eye { width: 16px; height: 16px; margin-left: 5px; }
.lk { width: 13px; height: 17px; margin-left: 8px; }
.layer { width: 59px; height: 27px; margin-left: 4px; display: flex; align-items: center; justify-content: space-between; border: 1px solid #aaa; background: #fff; padding-left: 8px; font-size: 10px; }
.layer svg { width: 17px; height: 25px; border-left: 1px solid #aaa; background: #f0f0f0; }
.grow { flex: 1; }
.coords { display: grid; grid-template-columns: 18px 51px; padding-left: 3px; }
.coords code { font: 11.7px/14px "Liberation Mono", monospace; }
.zl { width: 11px; }
.zoom { width: 45px; padding: 0 6px; letter-spacing: -.4px; }
.grip { width: 12px; height: 12px; margin: 8px 0 0 9px; }

.popup { position: absolute; background: #f0f0f0; border: 1px solid #9a9a9a; padding: 2px 1px 1px; box-shadow: 4px 4px 2px -1px rgba(0,0,0,.5); }
.ext { left: 316px; top: 44px; width: 208px; height: 261px; padding-top: 3px; }
.web { left: 522px; top: 280px; width: 132px; height: 44px; }
.js { left: 653px; top: 280px; width: 167px; height: 44px; }
.popup hr { height: 1px; margin: 2px 1px 4px 4px; border: 0; background: #cfcfcf; }
.it { position: relative; height: 19px; line-height: 20px; padding-left: 26px; white-space: nowrap; letter-spacing: -.37px; }
.it.hot { background: #d1e2f2; box-shadow: inset 0 0 0 1px #78aee5; }
.it.sub::after { content: ""; position: absolute; right: 7px; top: 5px; border: 4px solid transparent; border-left-color: #000; border-right-width: 0; }
```
FILE: app.js
```js
const NS = "http://www.w3.org/2000/svg";
const SCALE = 1.58;

function add(parent, name, attrs, text) {
  const el = document.createElementNS(NS, name);
  for (const k in attrs) el.setAttribute(k, attrs[k]);
  if (text !== undefined) el.textContent = text;
  parent.appendChild(el);
}

// Horizontal ruler: origin at x = 76
const h = document.getElementById("rulerH");
for (let u = -10; u <= 755; u += 5) {
  const x = 76 + Math.round(u * SCALE);
  const len = u % 50 === 0 ? 15 : u % 10 === 0 ? 6 : 3;
  add(h, "rect", { x, y: 102 - len, width: 1, height: len });
  if (u % 50 === 0) {
    const s = String(u);
    add(h, "text", { x: x + 2, y: 94, textLength: s.length * 4.3, lengthAdjust: "spacingAndGlyphs" }, s);
  }
}
add(h, "path", { d: "M701 95h9l-4.500 6z" });

// Vertical ruler: origin at y = 659, numbers stacked digit by digit
const v = document.getElementById("rulerV");
for (let u = -10; u <= 350; u += 5) {
  const y = 659 - Math.round(u * SCALE);
  const len = u % 50 === 0 ? 13 : u % 10 === 0 ? 5 : 2;
  add(v, "rect", { x: 51 - len, y, width: len, height: 1 });
  if (u % 50 === 0) {
    [...String(u)].forEach((d, i) => add(v, "text", { x: 38, y: y + 10 + i * 8 }, d));
  }
}
add(v, "path", { d: "M38 106h8v-3.500l5 4-5 4V107h-8z" });

const colors = ("000 1a1a1a 333 4d4d4d 666 808080 999 b3b3b3 ccc e6e6e6 ececec f2f2f2 f9f9f9 fff " +
  "800000 f00 808000 ff0 008000 0f0 008080 0ff 000080 00f 800080 f0f " +
  "2b0000 550000 800000 aa0000 d40000 ff0000 ff2a2a ff5555 ff8080 ffaaaa ffd5d5 " +
  "280b0b 501616 782121 a02c2c c83737 d35f5f de8787 e9afaf f4d7d7 " +
  "241c1c 483737 6c5353 916f6f ac9393 c8b7b7 e3dbdb " +
  "2b1100 552200 803300 aa4400 d45500 ff6600 ff7f2a ff9955 ffb380 ffccaa ffe6d5 " +
  "28170b 502d16 784421 a05a2c c87137 d38d5f deaa87 e9c6af f4e3d7 " +
  "241f1c 483e37 6c5d53 917c6f ac9d93 c8beb7").split(" ");
const box = document.getElementById("swatches");
const none = document.createElementNS(NS, "svg");
none.setAttribute("class", "sw none");
none.setAttribute("viewBox", "0 0 17 17");
add(none, "path", { d: "M0 0l17 17M17 0L0 17", stroke: "#801818", "stroke-width": 1.5 });
box.appendChild(none);
for (const c of colors) {
  const s = document.createElement("span");
  s.className = "sw";
  s.style.background = "#" + c;
  box.appendChild(s);
}
```
